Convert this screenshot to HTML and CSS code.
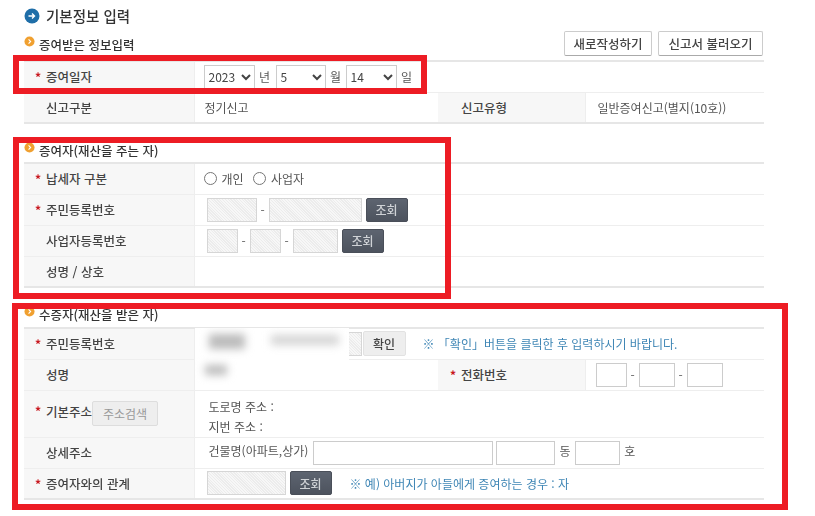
FILE: index.html
```html
<!DOCTYPE html>
<html lang="ko">
<head>
  <meta charset="UTF-8">
  <title>기본정보 입력</title>
  <link rel="stylesheet" href="styles.css">
</head>
<body>
  <div class="page">
    <h1 class="title">
      <svg class="title-icon" viewBox="0 0 16 16"><circle cx="8" cy="8" r="7.5" fill="#1f6ea8"/><path d="M4.5 8h6M8 5.5 10.5 8 8 10.5" fill="none" stroke="#fff" stroke-width="1.4"/></svg>
      기본정보 입력
    </h1>

    <div class="section-head first">
      <h2>
        <svg class="dot" viewBox="0 0 12 12"><circle cx="6" cy="6" r="5.5" fill="#f0a030"/><path d="M5 3.8 7.2 6 5 8.2" fill="none" stroke="#fff" stroke-width="1.2"/></svg>
        증여받은 정보입력
      </h2>
      <div class="head-btns">
        <button class="btn-white btn-new">새로작성하기</button>
        <button class="btn-white btn-load">신고서 불러오기</button>
      </div>
    </div>
    <table class="form-table">
      <colgroup><col class="col-label"><col class="col-value"><col class="col-label2"><col></colgroup>
      <tr class="row-date">
        <th><span class="req">*</span>증여일자</th>
        <td colspan="3" class="cell-date">
          <select class="sel-year"><option>2023</option></select><span class="unit">년</span><select class="sel-month"><option>5</option></select><span class="unit">월</span><select class="sel-year"><option>14</option></select><span class="unit">일</span>
        </td>
      </tr>
      <tr>
        <th>신고구분</th>
        <td class="cell-text">정기신고</td>
        <th class="th-mid">신고유형</th>
        <td class="cell-type">일반증여신고(별지(10호))</td>
      </tr>
    </table>

    <div class="section-head second">
      <h2>
        <svg class="dot" viewBox="0 0 12 12"><circle cx="6" cy="6" r="5.5" fill="#f0a030"/><path d="M5 3.8 7.2 6 5 8.2" fill="none" stroke="#fff" stroke-width="1.2"/></svg>
        증여자(재산을 주는 자)
      </h2>
    </div>
    <table class="form-table">
      <colgroup><col class="col-label"><col></colgroup>
      <tr>
        <th><span class="req">*</span>납세자 구분</th>
        <td class="cell-radio">
          <label class="radio-item"><input type="radio" name="kind">개인</label>
          <label class="radio-item"><input type="radio" name="kind">사업자</label>
        </td>
      </tr>
      <tr>
        <th><span class="req">*</span>주민등록번호</th>
        <td class="cell-inputs">
          <span class="hatch w50"></span><span class="dash">-</span><span class="hatch w93"></span>
          <button class="btn-dark">조회</button>
        </td>
      </tr>
      <tr>
        <th>사업자등록번호</th>
        <td class="cell-inputs">
          <span class="hatch w31"></span><span class="dash">-</span><span class="hatch w31"></span><span class="dash">-</span><span class="hatch w45"></span>
          <button class="btn-dark">조회</button>
        </td>
      </tr>
      <tr>
        <th>성명 / 상호</th>
        <td></td>
      </tr>
    </table>

    <div class="section-head third">
      <h2>
        <svg class="dot" viewBox="0 0 12 12"><circle cx="6" cy="6" r="5.5" fill="#f0a030"/><path d="M5 3.8 7.2 6 5 8.2" fill="none" stroke="#fff" stroke-width="1.2"/></svg>
        수증자(재산을 받은 자)
      </h2>
    </div>
    <table class="form-table">
      <colgroup><col class="col-label"><col class="col-value"><col class="col-label2"><col></colgroup>
      <tr>
        <th><span class="req">*</span>주민등록번호</th>
        <td colspan="3" class="cell-inputs masked">
          <span class="hatch w50"></span><span class="dash">-</span><span class="hatch w93"></span>
          <button class="btn-light">확인</button>
          <span class="note note-check">※ 「확인」버튼을 클릭한 후 입력하시기 바랍니다.</span>
          <div class="mask">
            <i class="smear smear-a"></i><i class="smear smear-b"></i><i class="smear smear-c"></i>
          </div>
        </td>
      </tr>
      <tr>
        <th>성명</th>
        <td></td>
        <th class="th-mid"><span class="req">*</span>전화번호</th>
        <td class="cell-phone">
          <input class="box w31" type="text"><span class="dash">-</span><input class="box w36" type="text"><span class="dash">-</span><input class="box w36" type="text">
        </td>
      </tr>
      <tr class="row-addr">
        <th><span class="req">*</span>기본주소<button class="btn-addr">주소검색</button></th>
        <td colspan="3" class="cell-addr">
          <div>도로명 주소 :</div>
          <div>지번 주소 :</div>
        </td>
      </tr>
      <tr>
        <th>상세주소</th>
        <td colspan="3" class="cell-detail">
          <span>건물명(아파트,상가)</span>
          <input class="box w180" type="text">
          <input class="box w59" type="text">
          <span>동</span>
          <input class="box w45" type="text">
          <span>호</span>
        </td>
      </tr>
      <tr>
        <th><span class="req">*</span>증여자와의 관계</th>
        <td colspan="3" class="cell-inputs">
          <span class="hatch w79"></span>
          <button class="btn-dark">조회</button>
          <span class="note note-rel">※ 예) 아버지가 아들에게 증여하는 경우 : 자</span>
        </td>
      </tr>
    </table>

    <div class="mark mark-date"></div>
    <div class="mark mark-giver"></div>
    <div class="mark mark-taker"></div>
  </div>
</body>
</html>
```

FILE: styles.css
```css
* { box-sizing: border-box; }
body {
  margin: 0;
  background: #fff;
  font-family: "Noto Sans CJK KR", "Noto Sans", sans-serif;
  font-size: 12px;
  color: #555;
}
.page {
  position: relative;
  width: 815px;
  height: 516px;
  padding: 0 51px 0 24px;
  overflow: hidden;
  filter: blur(0.35px);
}
.title {
  display: flex;
  align-items: center;
  gap: 6px;
  height: 31px;
  margin: 0;
  font-size: 14.5px;
  font-weight: 500;
  color: #333;
}
.title-icon { width: 16px; height: 16px; }
.section-head {
  display: flex;
  justify-content: space-between;
  align-items: center;
}
.section-head h2 {
  display: flex;
  align-items: center;
  gap: 4px;
  margin: 0;
  font-size: 12.5px;
  font-weight: 500;
  color: #333;
}
.dot { width: 11px; height: 11px; margin-top: -6px; }
.section-head.first { height: 29px; padding-bottom: 3px; }
.section-head.second { height: 27px; margin-top: 11px; padding-top: 3px; }
.section-head.third { height: 28px; margin-top: 11px; padding-top: 2px; }
.head-btns { display: flex; gap: 6px; margin-right: 1px; margin-top: -2px; }
.btn-white {
  height: 25px;
  padding: 0;
  background: #fff;
  border: 1px solid #ccc;
  border-bottom-color: #aaa;
  border-radius: 2px;
  font: 500 12.5px "Noto Sans CJK KR", sans-serif;
  color: #444;
}
.btn-new { width: 88px; }
.btn-load { width: 105px; }

.form-table {
  width: 740px;
  border-collapse: collapse;
  table-layout: fixed;
  border-top: 2px solid #e6e6e6;
  border-bottom: 2px solid #e6e6e6;
}
.col-label { width: 170px; }
.col-value { width: 244px; }
.col-label2 { width: 147px; }
.form-table tr { height: 31px; }
.form-table tr + tr { border-top: 1px solid #eee; }
.form-table tr.row-addr { height: 46px; }
.form-table th {
  position: relative;
  padding: 0 0 0 22px;
  background: #f7f7f7;
  border-right: 1px solid #eee;
  font-size: 12.5px;
  font-weight: 500;
  text-align: left;
  color: #444;
  white-space: nowrap;
}
.form-table td { padding: 0; white-space: nowrap; }
.form-table th.th-mid { padding-left: 23px; }
.req {
  position: absolute;
  margin-left: -11px;
  margin-top: 1px;
  font-size: 12px;
  font-weight: 700;
  color: #c8161d;
}
.cell-date { padding-left: 9px !important; font-size: 0; }
.cell-date select {
  height: 24px;
  padding-left: 0;
  background: #fff;
  border: 1px solid #ccc;
  font: 12px "Noto Sans CJK KR", sans-serif;
  color: #444;
  vertical-align: middle;
}
.sel-year { width: 51px; }
.sel-month { width: 50px; margin-left: 1px; }
.unit { display: inline-block; width: 20px; font-size: 12px; text-align: center; vertical-align: middle; }
.cell-text { padding-left: 10px !important; }
.cell-type { padding-left: 12px !important; }
.cell-radio { padding-left: 9px !important; }
.radio-item { display: inline-flex; align-items: center; margin-right: 6px; }
.radio-item input { width: 13px; height: 13px; margin: 0 5px 0 0; }
.cell-inputs {
  padding-left: 12px !important;
  font-size: 0;
}
.cell-inputs > * { vertical-align: middle; font-size: 12px; }
.hatch {
  display: inline-block;
  height: 24px;
  background: repeating-linear-gradient(45deg, #f7f7f7, #f7f7f7 1px, #ececec 1px, #ececec 2px);
  border: 1px solid #d6d6d6;
}
.box {
  height: 24px;
  padding: 0;
  background: #fff;
  border: 1px solid #ccc;
  vertical-align: middle;
}
.w31 { width: 31px; }
.w36 { width: 36px; }
.w45 { width: 45px; }
.w50 { width: 50px; }
.w59 { width: 59px; }
.w79 { width: 79px; }
.w93 { width: 93px; }
.w180 { width: 180px; }
.dash { display: inline-block; width: 12px; text-align: center; color: #666; vertical-align: middle; }
.btn-dark {
  width: 42px;
  height: 24px;
  margin-left: 4px;
  padding: 0;
  background: linear-gradient(#5d6470, #4d535e);
  border: 1px solid #4a4f59;
  border-radius: 2px;
  font: 500 12px "Noto Sans CJK KR", sans-serif;
  color: #cfd2d6;
}
.btn-light {
  width: 43px;
  height: 25px;
  margin-left: 1px;
  padding: 0;
  background: #eee;
  border: 1px solid #e2e2e2;
  border-radius: 2px;
  font: 500 12px "Noto Sans CJK KR", sans-serif;
  color: #444;
}
.btn-addr {
  width: 66px;
  height: 25px;
  margin-left: 0;
  padding: 0;
  background: #eee;
  border: 1px solid #ddd;
  border-radius: 2px;
  font: 12px "Noto Sans CJK KR", sans-serif;
  color: #999;
  vertical-align: middle;
}
.note { color: #3f86b5; }
.note-check { margin-left: 17px; }
.note-rel { margin-left: 18px; }
.masked { position: relative; }
.mask {
  position: absolute;
  left: 0;
  top: -1px;
  width: 154px;
  height: 60px;
  background: #fff;
  overflow: hidden;
}
.smear { position: absolute; display: block; background: #bbb; filter: blur(4px); }
.smear-a { left: 14px; top: 6px; width: 36px; height: 15px; }
.smear-b { left: 76px; top: 7px; width: 68px; height: 10px; background: #d4d4d4; }
.smear-c { left: 10px; top: 37px; width: 22px; height: 10px; }
.cell-phone { padding-left: 10px !important; font-size: 0; }
.cell-phone .dash { font-size: 12px; }
.cell-addr { padding-left: 14px !important; padding-top: 6px !important; line-height: 20px; }
.cell-detail { padding-left: 13px !important; }
.cell-detail input { margin: 0; }
.cell-detail span { margin: 0 1px; }
.mark {
  position: absolute;
  border: 6px solid #ed1c24;
}
.mark-date { left: 13px; top: 55px; width: 414px; height: 39px; }
.mark-giver { left: 13px; top: 137px; width: 438px; height: 162px; }
.mark-taker { left: 12px; top: 303px; width: 776px; height: 207px; }
```
